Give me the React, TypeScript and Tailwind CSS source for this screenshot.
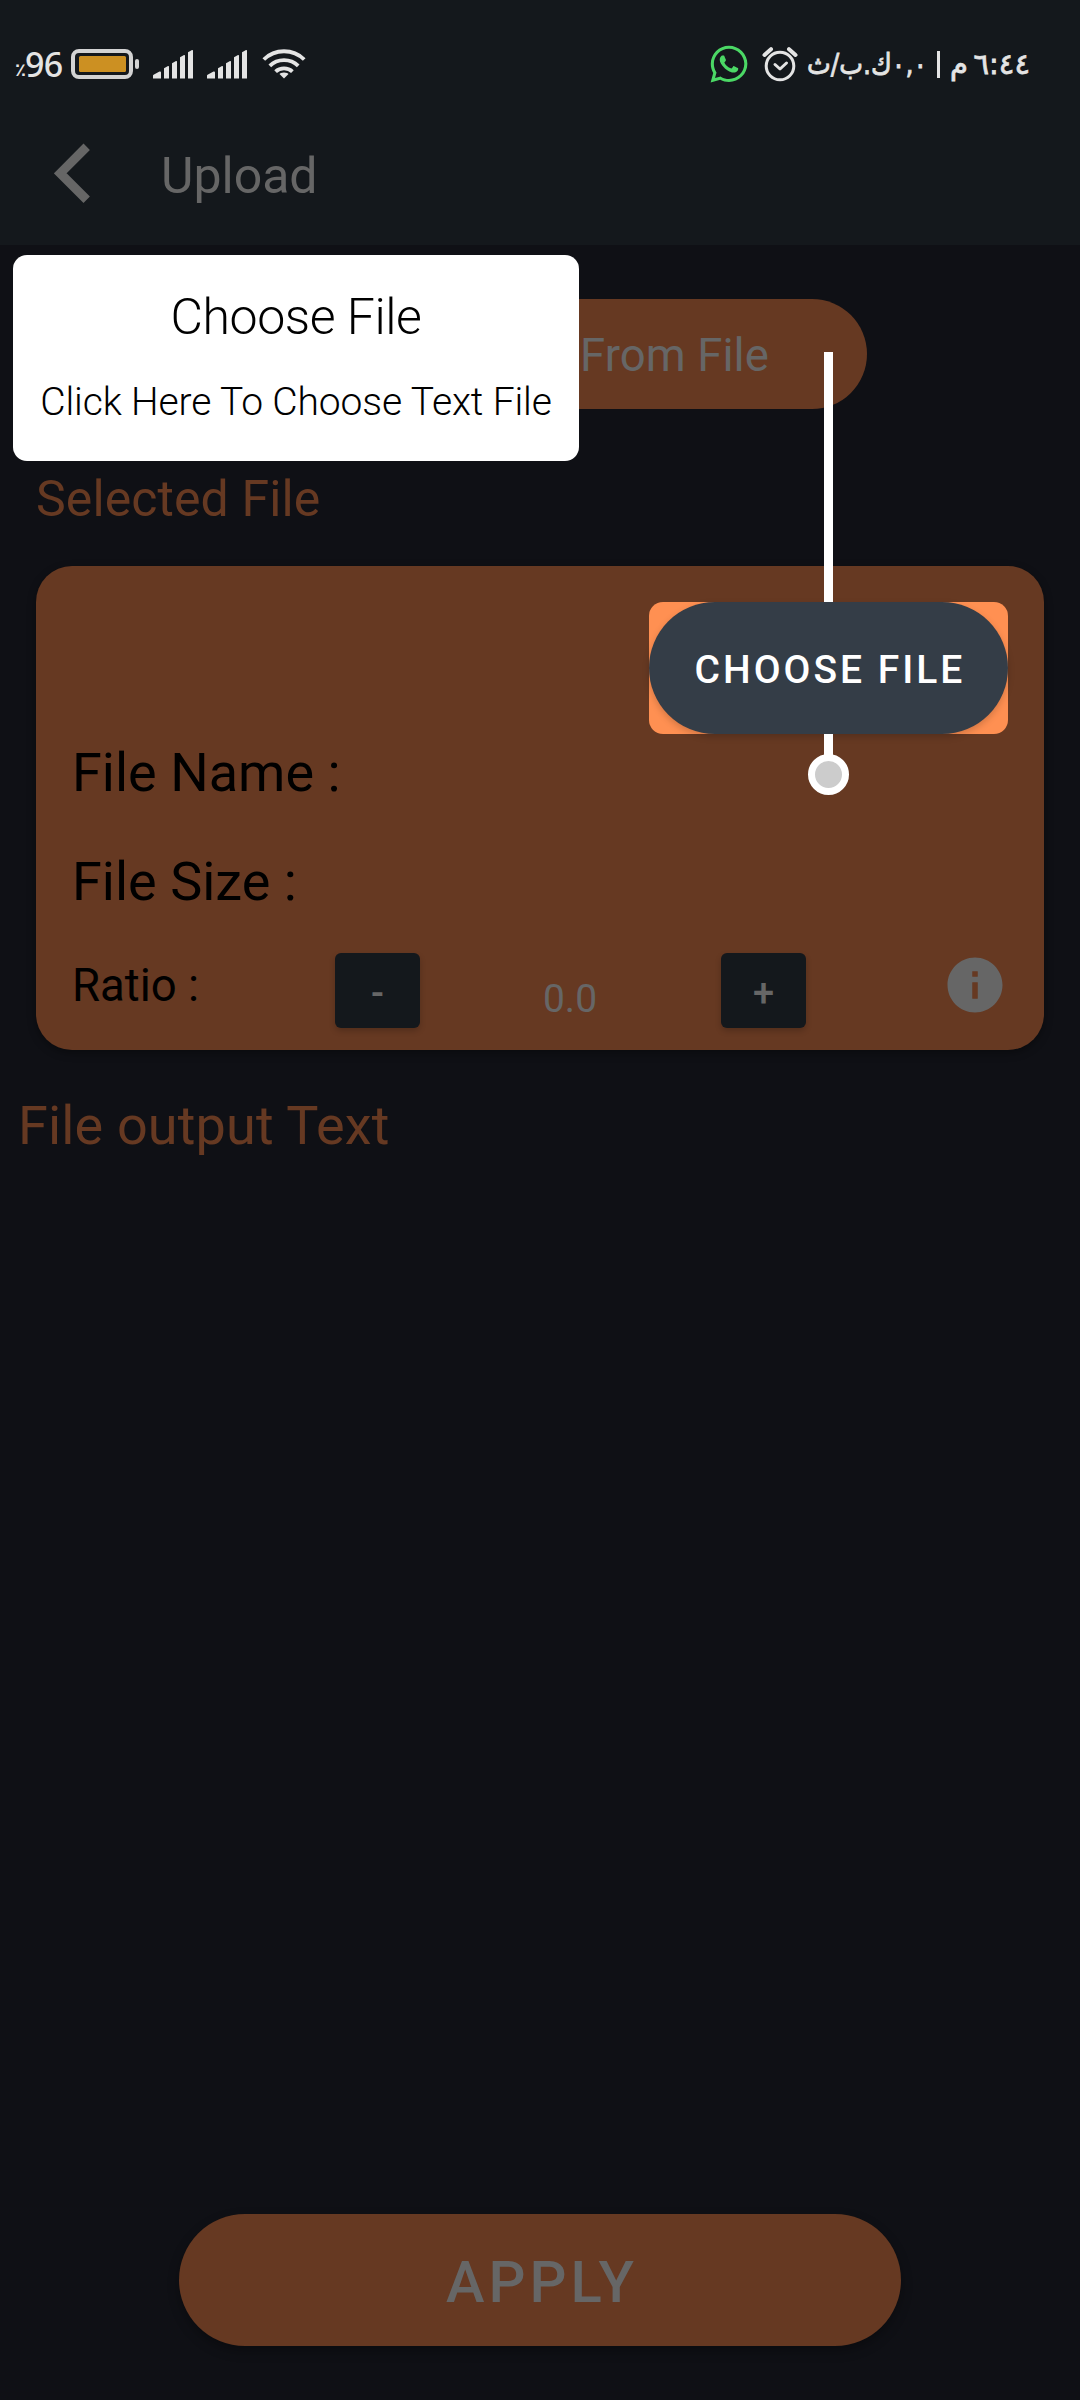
import React from "react";
import { MdInfo } from "react-icons/md";
import { FaWhatsapp } from "react-icons/fa";

function Signal() {
  return (
    <svg className="h-[30px] w-[41px]" viewBox="0 0 41 30" fill="#e4e4e4">
      <path d="M0 29.5V26.5Q0 26 1 25.5L6.5 22.5Q8 22 8 23.5V29.5Z" />
      <path d="M11 29.5V19.2L15 17Q16 16.600 16 18V29.500Z" />
      <path d="M19 29.5V14.200L23 12Q24 11.600 24 13V29.500Z" />
      <path d="M27 29.5V8.200L31 6Q32 5.600 32 7V29.500Z" />
      <path d="M35 29.5V3.200L39 1Q40 .600 40 2V29.500Z" />
    </svg>
  );
}

function StatusBar() {
  return (
    <div className="flex h-[128px] items-center text-[#e4e4e4]">
      <span className="ml-[15px] mt-[12px] w-[10px] font-['DejaVu_Sans'] text-[18px] leading-none font-bold">٪</span>
      <span className="w-[38px] font-['Noto_Sans'] text-[34px] leading-none font-medium tracking-[-0.8px]">96</span>
      <svg className="ml-[8px] h-[30px] w-[69px]" viewBox="0 0 69 30">
        <rect x="2" y="2" width="58" height="26" rx="6" fill="none" stroke="#d3d3d3" strokeWidth="4" />
        <rect x="8" y="7" width="47" height="16" rx="1.500" fill="#cc9022" />
        <rect x="64" y="10" width="4" height="10" rx="2" fill="#d3d3d3" />
      </svg>
      <div className="ml-[13px] flex gap-[13px]">
        <Signal />
        <Signal />
      </div>
      <svg className="ml-[14px] h-[32px] w-[44px]" viewBox="0 0 44 32" fill="none" stroke="#e4e4e4" strokeWidth="3.800">
        <path d="M1.800 11.500C13 .500 31 .500 42.200 11.500" />
        <path d="M7.800 17.800C15.500 10.200 28.500 10.200 36.200 17.800" />
        <path d="M13.600 23.600C18 19.300 26 19.300 30.400 23.600" />
        <path d="M22 24.500C24.500 24.500 26 25.500 26.500 26L22 30.500L17.500 26C18 25.500 19.500 24.500 22 24.500Z" fill="#e4e4e4" stroke="none" />
      </svg>
      <FaWhatsapp className="ml-[402px] size-[42px] text-[#4bd865]" />
      <svg className="ml-[12px] h-[36px] w-[36px]" viewBox="0 0 36 36" fill="none" stroke="#e4e4e4" strokeWidth="3" strokeLinecap="round" strokeLinejoin="round">
        <circle cx="18" cy="20" r="13.800" />
        <path d="M13 18.500L18 23L24.500 17" />
        <path d="M2.500 9L9 3.200M33.500 9L27 3.200" strokeWidth="4" />
      </svg>
      <div className="ml-[7px] flex items-center font-['DejaVu_Sans'] text-[29px] leading-none whitespace-nowrap [-webkit-text-stroke:0.8px_#e4e4e4]">
        <span dir="rtl" className="w-[122px] origin-right scale-x-[0.87]">٠,٠ك.ب/ث</span>
        <span className="ml-[10px] h-[27px] w-[3px] bg-[#e4e4e4]" />
        <span className="ml-[10px] w-[16px]">م</span>
        <span dir="rtl" className="ml-[10px] w-[54px]">٦:٤٤</span>
      </div>
    </div>
  );
}

function StepButton({ label }: { label: string }) {
  return (
    <button className="h-[75px] w-[85px] rounded-[6px] bg-[#14181c] pt-[4px] text-[38px] leading-none font-medium text-[#666] shadow-[0_3px_6px_rgba(0,0,0,0.2)]">
      {label}
    </button>
  );
}

export default function App() {
  return (
    <div className="relative flex h-[2400px] w-[1080px] flex-col overflow-hidden bg-[#0f1015] font-['Roboto',sans-serif]">
      <header className="h-[245px] shrink-0 bg-[#14181c]">
        <StatusBar />
        <div className="flex h-[90px] items-center">
          <svg className="ml-[54px] h-[60px] w-[36px]" viewBox="0 0 36 60" fill="none" stroke="#666" strokeWidth="9">
            <path d="M32.700 3.800L6.200 30.300L32.700 56.800" />
          </svg>
          <h1 className="mt-[5px] ml-[71px] text-[50px] leading-[60px] text-[#666]">Upload</h1>
        </div>
      </header>

      <main className="flex flex-1 flex-col">
        <button className="mt-[54px] flex h-[110px] w-[654px] items-center justify-end self-center rounded-full bg-[#663922] pt-[4px] pr-[98px] text-[45.5px] tracking-[0.1px] text-[#666]">
          From File
        </button>
        <h2 className="mt-[60px] ml-[36px] text-[50px] leading-[60px] tracking-[0.1px] text-[#663922]">Selected File</h2>

        <section className="mx-[36px] mt-[37px] flex h-[484px] flex-col rounded-[36px] bg-[#663922] pt-[36px] text-black shadow-[0_3px_8px_rgba(0,0,0,0.35)]">
          <div className="mr-[36px] self-end rounded-[14px] bg-[#ff9052]">
            <button className="h-[132px] w-[359px] rounded-full bg-[#343d47] pt-[4px] pl-[3px] text-[39px] font-medium tracking-[3px] text-white shadow-[0_3px_7px_rgba(0,0,0,0.18)]">
              CHOOSE FILE
            </button>
          </div>
          <p className="mt-[7px] ml-[36px] text-[54px] leading-[64px]">File Name :</p>
          <p className="mt-[45px] ml-[36px] text-[54px] leading-[64px]">File Size :</p>
          <div className="mt-[39px] flex h-[75px] items-start">
            <span className="ml-[36px] w-[263px] pt-[6px] text-[45.5px] leading-[54px]">Ratio :</span>
            <StepButton label="-" />
            <span className="w-[301px] pt-[23px] pr-px text-center text-[39px] leading-[46px] text-[#666]">0.0</span>
            <StepButton label="+" />
            <MdInfo className="-mt-px ml-[136px] size-[66px] text-[#666]" />
          </div>
        </section>

        <h2 className="mt-[44px] ml-[18px] text-[54px] leading-[64px] tracking-[0.15px] text-[#663922]">File output Text</h2>

        <button className="mt-auto mb-[54px] h-[132px] w-[722px] self-center rounded-full bg-[#663922] pt-[4px] pl-[4px] text-[58px] font-medium tracking-[4px] text-[#666] shadow-[0_5px_12px_rgba(0,0,0,0.3)]">
          APPLY
        </button>
      </main>

      {/* Guide overlay: message bubble and its pointer */}
      <div className="absolute top-[255px] left-[13px] flex h-[206px] w-[566px] flex-col items-center rounded-[14px] bg-white font-light text-black">
        <p className="mt-[32px] text-[50px] leading-[60px] tracking-[-0.45px]">Choose File</p>
        <p className="mt-[32px] text-[39px] leading-[46px] tracking-[-0.12px] whitespace-nowrap">Click Here To Choose Text File</p>
      </div>
      <div className="absolute top-[352px] left-[824px] h-[250px] w-[9px] bg-white" />
      <div className="absolute top-[734px] left-[824px] h-[24px] w-[9px] bg-white" />
      <div className="absolute top-[754px] left-[808px] size-[41px] rounded-full border-[7px] border-white bg-[#ccc]" />
    </div>
  );
}
